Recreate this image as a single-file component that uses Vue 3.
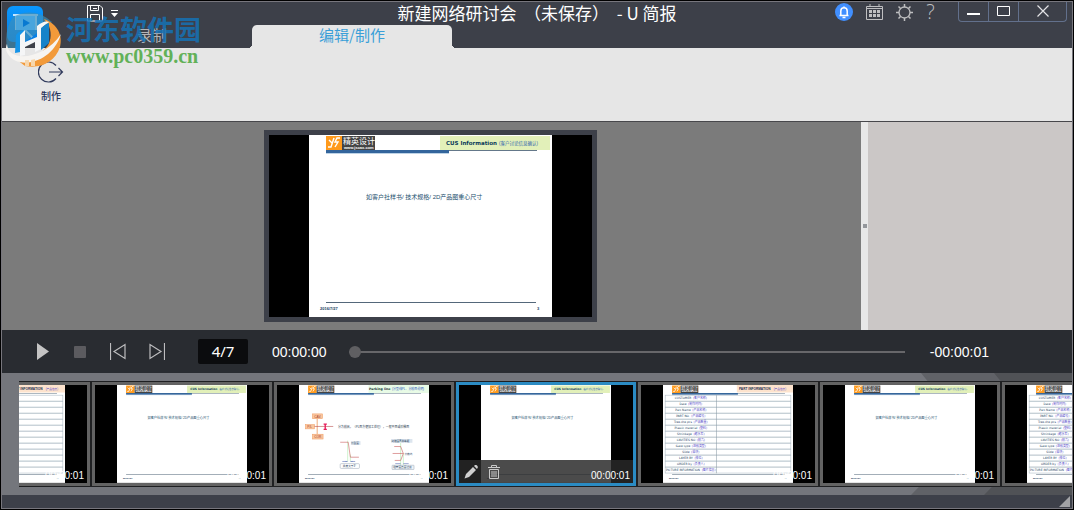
<script setup>
import { ref } from 'vue'

const position = ref(0)
const rows = [
  ['CUSTOMER', '(客户名称)'],
  ['Date', '(制作时间)'],
  ['Part Name', '(产品名称)'],
  ['PART NO.', '(产品编号)'],
  ['Tree-the pcs', '(产品数量)'],
  ['Plastic material', '(塑料)'],
  ['Shrinkage', '(缩水率)'],
  ['CAVITIES NO', '(模穴)'],
  ['Gate type', '(进胶类型)'],
  ['Slide', '(滑块)'],
  ['LAYER BY', '(排位)'],
  ['ORDER by', '(负责人)'],
  ['PICTURE INFORMATION', '(图片信息)']
]
const thumbs = [
  { id: 1, kind: 'table' },
  { id: 2, kind: 'text' },
  { id: 3, kind: 'diagram' },
  { id: 4, kind: 'text', active: true },
  { id: 5, kind: 'table' },
  { id: 6, kind: 'text' },
  { id: 7, kind: 'table' }
]
</script>

<template>
  <div class="window">
    <svg width="0" height="0" class="defs" aria-hidden="true">
      <defs>
        <g id="slide-base">
          <rect width="243" height="183" fill="#fff" />
          <rect x="17" y="15" width="211" height="1" fill="#64788a" />
          <rect x="17" y="18" width="123" height="1" fill="#bdd3e6" />
          <rect x="17" y="15" width="123" height="3" fill="#33659c" />
          <rect x="17" y="1" width="16" height="14" fill="#ff9a1c" />
          <path d="M20 5l3 3M25 3l-3 9h-3M31 3h-3l-2 4h3l-3 5" stroke="#fff" stroke-width="1.4" fill="none" />
          <rect x="33" y="1" width="33" height="14" fill="#444" />
          <text x="34" y="9" font-size="8" fill="#fff">精英设计</text>
          <text x="35" y="14" font-size="4" font-weight="bold" fill="#fff">www.jscax.com</text>
          <rect x="17" y="167" width="210" height="1" fill="#53677a" />
          <text x="11" y="175" font-size="4" font-weight="bold" fill="#123a5c">2016/7/27</text>
          <text x="228" y="175" font-size="4" font-weight="bold" fill="#123a5c">3</text>
        </g>
        <g id="slide-text">
          <use href="#slide-base" />
          <rect x="131" y="1" width="110" height="14" fill="#e2f0b9" />
          <text x="137" y="10" font-size="5.5" font-weight="bold" class="deja" fill="#0b3b59">CUS Information</text>
          <text x="190" y="10" font-size="4.5" fill="#2f62ad">(客户讨论信息确认)</text>
          <text x="57" y="64" font-size="6" fill="#24506e">如客户社样书/ 技术规格/ 2D产品图重心尺寸</text>
        </g>
        <g id="slide-table">
          <use href="#slide-base" />
          <rect x="138" y="0" width="105" height="14" fill="#fde3cd" />
          <text x="142" y="10" font-size="6" font-weight="bold" fill="#202c4c">PART INFORMATION</text>
          <text x="207" y="10" font-size="5" fill="#5a49c8">(产品信息)</text>
          <g v-for="(row, i) in rows" :key="row[0]">
            <rect x="4" :y="19 + i * 11.2" width="235" height="11.2" fill="none" stroke="#a9b8c2" />
            <text x="52" :y="26.5 + i * 11.2" font-size="5.5" text-anchor="middle" class="deja" fill="#1d405e">{{ row[0] }}<tspan dx="3" fill="#5146c8">{{ row[1] }}</tspan></text>
          </g>
          <path d="M100 19v146" stroke="#8698a5" />
        </g>
        <g id="slide-diagram">
          <use href="#slide-base" />
          <rect x="130" y="0" width="113" height="15" fill="#e8fbe6" />
          <text x="131" y="10" font-size="6" font-weight="bold" class="deja" fill="#133">Parking line</text>
          <text x="174" y="10" font-size="5.5" fill="#3559bd">(分型线PL、分模面说明)</text>
          <path d="M34 63v29" stroke="#f0b183" stroke-width="2" />
          <g fill="#fbc79e" stroke="#ef9e68">
            <rect x="25" y="54" width="19" height="9" />
            <rect x="12" y="74" width="17" height="8" />
            <rect x="25" y="92" width="20" height="9" />
          </g>
          <g font-size="6" fill="#a33d2d" text-anchor="middle">
            <text x="35" y="61">CAV.</text><text x="20" y="80">P/L</text><text x="35" y="99">COR</text>
          </g>
          <path d="M29 77.5h35" stroke="#b33a3a" />
          <path d="M46 73h6M46 83h6M49 73v10" stroke="#e71b5a" stroke-width="2.500" />
          <text x="73" y="80" font-size="5.5" fill="#2c3e52">分为模具，（PL面方便加工处理），一般平面或阶梯面</text>
          <path d="M91 104v39M96 130v13M190 108v42M195 128v22" stroke="#a4e6a2" fill="none" />
          <path d="M77 107h15l4 28h16M178 115h12l5 13-5 13h-11M175 128h20" stroke="#c24a4a" fill="none" />
          <path d="M81 143h10m-3-1v2M96 143h9m-6-1v2M180 147h10M195 147h10" stroke="#4860ae" />
          <rect x="97" y="105" width="18" height="7" fill="#dce5ee" />
          <rect x="77" y="147" width="36" height="9" rx="2" fill="#fff" stroke="#9caab9" />
          <rect x="172" y="101" width="40" height="7" fill="#dce5ee" />
          <rect x="174" y="150" width="41" height="8" rx="1" fill="#eef2f6" stroke="#9caab9" />
          <g font-size="5" fill="#243d5c">
            <text x="97" y="110">分型面</text><text x="82" y="154">角度大于3°</text>
            <text x="173" y="107">封胶面R角等距</text><text x="197" y="130">分模线</text><text x="176" y="156">插穿面直面过渡</text>
          </g>
        </g>
      </defs>
    </svg>

    <header class="header">
      <div class="titlebar">
        <div class="quick">
          <button aria-label="保存">
            <svg width="16" height="17" viewBox="0 0 16 17" fill="none" stroke="#fff"><path d="M.5.5H13l2.500 2.500V16H.5zM3.500 .5v5h8v-5M6 3.500h4M3.500 16V9.500h9V16" /></svg>
          </button>
          <button aria-label="自定义快速访问">
            <svg width="7" height="8" viewBox="0 0 7 8" fill="#fff"><path d="M0 0h7v1H0zM0 3h7L3.500 7z" /></svg>
          </button>
        </div>
        <h1 class="title">新建网络研讨会&nbsp; （未保存）&nbsp; - U 简报</h1>
        <div class="right">
          <button aria-label="通知">
            <svg width="18" height="18" viewBox="0 0 18 18"><circle cx="9" cy="9" r="9" fill="#418fff" /><path d="M4.500 12.500h9M5.800 12.500V8a3.200 3.200 0 0 1 6.400 0v4.500M9 3.500v1M7.500 14.500h3" fill="none" stroke="#fff" stroke-width="1.500" /></svg>
          </button>
          <button aria-label="日历">
            <svg width="17" height="17" viewBox="0 0 17 17"><path d="M.5 2.500h16v13H.5zM.5 4.500h16M4 0v3M13 0v3" fill="none" stroke="#bfbfc1" /><path d="M3 6h3v3H3zM7 6h3v3H7zM11 6h3v3h-3zM3 10h3v3H3zM7 10h3v3H7zM11 10h3v3h-3z" fill="#bfbfc1" /></svg>
          </button>
          <button aria-label="设置">
            <svg width="17" height="17" viewBox="0 0 17 17" fill="none" stroke="#bfbfc1"><circle cx="8.500" cy="8.500" r="5.500" stroke-width="1.300" /><path d="M8.500 0v3M8.500 14v3M0 8.500h3M14 8.500h3M2.500 2.500l2 2M12.500 12.500l2 2M14.500 2.500l-2 2M4.500 12.500l-2 2" stroke-width="1.500" /></svg>
          </button>
          <button class="help" aria-label="帮助">?</button>
          <div class="controls">
            <button aria-label="最小化"><svg width="14" height="12" viewBox="0 0 14 12"><path d="M0 7h13v2H0z" fill="#fff" /></svg></button>
            <button aria-label="最大化"><svg width="14" height="12" viewBox="0 0 14 12"><path d="M.5.5h12v9H.5z" fill="none" stroke="#fff" /></svg></button>
            <button class="close" aria-label="关闭"><svg width="12" height="14" viewBox="0 0 12 14"><path d="M.5 .5l11 11M11.500.5l-11 11" stroke="#e4e4e6" stroke-width="1.200" /></svg></button>
          </div>
        </div>
      </div>
      <nav class="tabs">
        <button class="tab">录制</button>
        <button class="tab active">编辑/制作</button>
      </nav>
      <div class="brand">
        <svg width="58" height="64" viewBox="0 0 58 64">
          <defs>
            <linearGradient id="sky" x1="0" y1="0" x2="0" y2="1"><stop offset="0" stop-color="#0a98ff" /><stop offset="1" stop-color="#087ce0" /></linearGradient>
          </defs>
          <rect x="1" width="36" height="36" rx="6" fill="url(#sky)" />
          <path d="M7 9h25M10 10v13h20V10M19 24l-6 7M19 24l7 7" fill="none" stroke="#c4e6ff" stroke-width="2" />
          <path d="M7 11Q28 0 46 16l-8 6L10 42H1Q-2 24 7 11z" fill="#3d8fb8" opacity=".65" />
          <rect x="10" y="10" width="19" height="14" fill="#49a5dd" />
          <path d="M17 13l7 4-7 4z" fill="#0879d1" />
          <path d="M38 13C52 18 57 30 54 41 49 56 35 63 19 60L10 53C35 54 50 38 43 20z" fill="#f29a3a" />
          <path d="M1 38C2 57 38 54 55 28 46 58 11 64 2 48-1 44 0 40 1 38z" fill="#f6f4f1" />
          <path d="M10 29q4-5 9-5v20q-5 3-10 3z" fill="#1594e8" />
          <path d="M19 24v12l12-5V20q7-6 12-4l-8 6v21l-6 3V36l-10 5v8l-5 1V29z" fill="#f5f6f7" />
          <path d="M35 23q4-5 8-6v20l-8 7z" fill="#1683c9" />
          <path d="M23 54v6h-4v-6zM29 53v7h-4v-6z" fill="#f7d7ad" />
        </svg>
        <div class="mark">
          <span class="cn">河东软件园</span>
          <span class="url">www.pc0359.cn</span>
        </div>
      </div>
    </header>

    <section class="ribbon">
      <button class="produce">
        <svg width="26" height="22" viewBox="0 0 26 22" fill="none" stroke="#303a5c" stroke-width="1.200"><path d="M18 4.500A10 10 0 1 0 18 17.500M11 11h13.500M20.500 7l4 4-4 4" /></svg>
        <span>制作</span>
      </button>
    </section>

    <main class="workspace">
      <div class="stage">
        <div class="screen">
          <svg viewBox="0 0 243 182" class="slide"><use href="#slide-text" /></svg>
        </div>
      </div>
      <div class="splitter"><i></i></div>
      <aside class="side"></aside>
    </main>

    <section class="player">
      <button class="play" aria-label="播放"><svg width="13" height="17" viewBox="0 0 13 17"><path d="M0 0l12 8.500L0 17z" fill="#c4c4c4" /></svg></button>
      <button class="stop" aria-label="停止"><svg width="12" height="12" viewBox="0 0 12 12"><rect width="12" height="12" rx="1" fill="#5b5b5f" /></svg></button>
      <button class="prev" aria-label="上一页"><svg width="16" height="17" viewBox="0 0 16 17" fill="none" stroke="#bdbdbf"><path d="M.5 0v17M15 1.500v14L4 8.500z" stroke-width="1.200" /></svg></button>
      <button class="next" aria-label="下一页"><svg width="16" height="17" viewBox="0 0 16 17" fill="none" stroke="#bdbdbf"><path d="M15.500 0v17M1 1.500v14l11-7z" stroke-width="1.200" /></svg></button>
      <span class="count">4/7</span>
      <span class="time">00:00:00</span>
      <input v-model="position" class="seek" type="range" min="0" max="100" aria-label="播放进度" />
      <span class="remain">-00:00:01</span>
    </section>

    <section class="strip">
      <i class="facet"></i>
      <i class="facet far"></i>
      <div class="reel">
        <ul class="track">
          <li v-for="t in thumbs" :key="t.id" class="thumb" :class="{ active: t.active }">
            <div class="cell">
              <svg viewBox="0 0 243 183" class="slide"><use :href="'#slide-' + t.kind" /></svg>
              <div class="bar">
                <template v-if="t.active">
                  <button class="edit" aria-label="编辑"><svg width="14" height="14" viewBox="0 0 14 14" fill="#d0d0d0"><path d="M9 2l3 3-7 7-4.500 1.500L2 9zM10 1l1-1q1-.5 2 .5t.8 2L13 4z" /></svg></button>
                  <button class="trash" aria-label="删除"><svg width="12" height="14" viewBox="0 0 12 14" fill="none" stroke="#c9c9c9"><path d="M0 2.500h12M3.500 2V.5h5V2M1.500 4.500v9h9v-9zM4 6v6M6 6v6M8 6v6" /></svg></button>
                </template>
                <span class="stamp">00:00:01</span>
              </div>
            </div>
          </li>
        </ul>
      </div>
    </section>

    <footer class="status">
      <svg width="11" height="11" viewBox="0 0 11 11"><path d="M11 0v11H0z" fill="#a2a3a6" /></svg>
    </footer>
  </div>
</template>

<style>
body {
  background: #000;
}
</style>

<style scoped>
* {
  box-sizing: border-box;
}
.window {
  display: flex;
  flex-direction: column;
  min-height: calc(100vh - 2px);
  margin: 1px;
  border: 1px solid #77767d;
  font-family: "Liberation Sans", "Noto Sans CJK SC", sans-serif;
}
.defs {
  position: absolute;
}
.deja {
  font-family: "DejaVu Sans", "Noto Sans CJK SC", sans-serif;
}
button {
  display: flex;
  align-items: center;
  justify-content: center;
  padding: 0;
  border: 0;
  background: none;
  font: inherit;
  color: inherit;
}
svg {
  display: block;
}
.header {
  position: relative;
  background: #3d4049;
}
.titlebar {
  display: grid;
  grid-template-columns: 1fr auto 1fr;
  height: 23px;
}
.quick {
  display: flex;
  align-items: center;
  gap: 8px;
  padding-left: 85px;
}
.title {
  margin: 0;
  font: 17px/22px "Noto Sans CJK SC", sans-serif;
  color: #fff;
}
.right {
  display: flex;
  justify-content: flex-end;
  gap: 13px;
  height: 20px;
  padding-right: 5px;
}
.help {
  width: 9px;
  margin-right: 10px;
  font: 20px/20px "Open Sans", sans-serif;
  font-weight: 300;
  color: #bfbfc1;
}
.controls {
  display: flex;
  border: 1px solid #62708c;
  border-top: 0;
  border-radius: 0 0 4px 4px;
}
.controls button {
  width: 30px;
  border-right: 1px solid #62708c;
}
.controls .close {
  width: 47px;
  border: 0;
}
.tabs {
  display: flex;
  height: 23px;
  padding-left: 50px;
}
.tab {
  position: relative;
  width: 200px;
  padding-bottom: 4px;
  font: 15px/18px "Noto Sans CJK SC", sans-serif;
  color: #b4b4b6;
}
.tab.active {
  border-radius: 5px 5px 0 0;
  background: #e6e6e6;
  color: #3a9fd8;
}
.tab.active::before,
.tab.active::after {
  content: "";
  position: absolute;
  bottom: 0;
  width: 4px;
  height: 4px;
}
.tab.active::before {
  right: 100%;
  background: radial-gradient(circle at 0 0, transparent 4px, #e6e6e6 4px);
}
.tab.active::after {
  left: 100%;
  background: radial-gradient(circle at 100% 0, transparent 4px, #e6e6e6 4px);
}
.brand {
  position: absolute;
  z-index: 1;
  top: 4px;
  left: 4px;
  display: flex;
  gap: 2px;
  pointer-events: none;
}
.mark {
  display: flex;
  flex-direction: column;
  padding-top: 7px;
}
.cn {
  font: bold 27px/32px "Noto Sans CJK SC", sans-serif;
  color: #1672b5;
  opacity: 0.85;
}
.url {
  font: bold 20px/22px "Liberation Serif", serif;
  color: #62b158;
}
.ribbon {
  display: flex;
  align-items: flex-start;
  height: 74px;
  padding: 13px 29px 0;
  border-bottom: 1px solid #47474b;
  background: #e6e6e6;
}
.produce {
  flex-direction: column;
  gap: 6px;
  width: 40px;
  font: 500 10px/14px "Noto Sans CJK SC", sans-serif;
  color: #26335c;
}
.workspace {
  display: flex;
  flex: 1;
}
.stage {
  display: flex;
  flex: 1;
  align-items: center;
  justify-content: center;
  padding: 8px 2px 8px 0;
  background: #7b7b7b;
}
.screen {
  display: flex;
  justify-content: center;
  width: 333px;
  border: 5px solid #3d4049;
  background: #000;
}
.screen .slide {
  width: 243px;
}
.splitter {
  display: flex;
  align-items: center;
  justify-content: center;
  width: 7px;
  background: #e8e8e8;
}
.splitter i {
  width: 4px;
  height: 4px;
  background: #94979b;
}
.side {
  width: 204px;
  background: #cbc7c6;
}
.player {
  display: flex;
  align-items: center;
  height: 43px;
  padding: 0 83px 0 35px;
  background: #292c31;
  font-size: 14px;
  color: #fff;
}
.stop {
  margin-left: 24px;
}
.prev {
  margin-left: 24px;
}
.next {
  margin-left: 23px;
}
.count {
  width: 50px;
  margin: 0 24px 0 33px;
  border-radius: 2px;
  background: #0b0c0e;
  font: 15px/25px "Noto Sans", sans-serif;
  text-align: center;
}
.seek {
  flex: 1;
  min-width: 0;
  height: 12px;
  margin: 0 25px 0 22px;
  appearance: none;
  background: linear-gradient(#67676a, #67676a) center / 100% 2px no-repeat;
}
.seek::-webkit-slider-thumb {
  appearance: none;
  width: 12px;
  height: 12px;
  border-radius: 50%;
  background: #5f5f62;
}
.strip {
  position: relative;
  padding: 8px 0 8px 17px;
  background: #74767c;
}
.facet {
  position: absolute;
  inset: 0 0 0 auto;
  width: 161px;
  background: #606267;
  clip-path: polygon(10px 0, 100% 0, 100% 100%, 0 100%, 60px 50%);
}
.facet.far {
  width: 88px;
  background: #505256;
}
.reel {
  position: relative;
  overflow: hidden;
}
.track {
  display: flex;
  margin: 0 0 0 -110px;
  padding: 0;
  list-style: none;
}
.thumb {
  flex: 0 0 182px;
  padding: 3px;
  border: 1px solid #1f2022;
  background: #636363;
}
.thumb.active {
  background: #2b8bc3;
}
.cell {
  position: relative;
  display: flex;
  justify-content: center;
  background: #000;
}
.cell .slide {
  width: 130px;
}
.bar {
  position: absolute;
  inset: auto 0 0;
  display: flex;
  align-items: center;
  height: 23px;
  padding: 0 3px 0 5px;
}
.active .bar {
  background: rgba(41, 41, 41, 0.84);
}
.trash {
  margin-left: 10px;
}
.stamp {
  margin: 9px 0 0 auto;
  font-size: 10px;
  line-height: 14px;
  color: #fff;
}
.status {
  display: flex;
  align-items: center;
  justify-content: flex-end;
  height: 13px;
  padding-right: 2px;
  background: #3d4049;
}
</style>
